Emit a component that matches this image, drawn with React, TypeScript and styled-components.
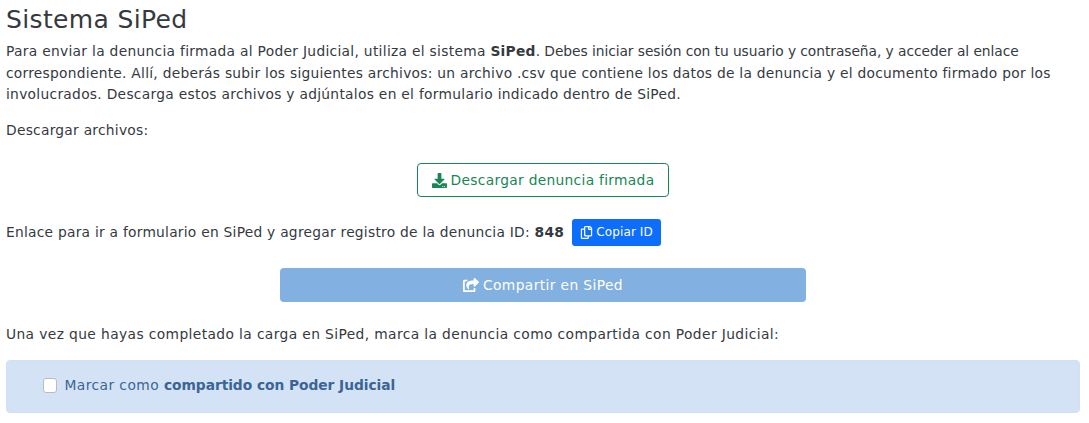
import React from 'react'
import styled, { createGlobalStyle } from 'styled-components'
import { FaDownload, FaRegCopy, FaShareSquare } from 'react-icons/fa'

const GlobalStyle = createGlobalStyle`
  * {
    box-sizing: border-box;
  }

  body {
    margin: 0;
    background: #fff;
    color: #343a40;
    font-family: "DejaVu Sans", sans-serif;
    font-size: 13.8px;
    line-height: 21.6px;
    letter-spacing: 0.26px;
  }
`

const Page = styled.article`
  width: 1089px;
  height: 423px;
  padding: 4px 9px 0 6px;
  overflow: hidden;
`

const Title = styled.h2`
  margin: 0 0 6px;
  font-size: 25px;
  font-weight: 400;
  line-height: 31px;
  letter-spacing: 0.35px;
`

const Paragraph = styled.p`
  margin: 0 0 14px;
`

const Line = styled.span<{ $track?: number }>`
  display: block;
  white-space: nowrap;
  letter-spacing: ${p => p.$track ?? 0.26}px;
`

const Tracked = styled.span<{ $track: number }>`
  letter-spacing: ${p => p.$track}px;
`

const Centered = styled.div<{ $top: number }>`
  display: flex;
  justify-content: center;
  margin-top: ${p => p.$top}px;
`

const OutlineButton = styled.button`
  display: inline-flex;
  align-items: center;
  justify-content: center;
  gap: 4px;
  width: 252px;
  height: 34px;
  border: 1px solid #198754;
  border-radius: 4px;
  background: #fff;
  color: #198754;
  font: inherit;
  letter-spacing: 0.3px;
`

const LinkRow = styled.div`
  display: flex;
  align-items: center;
  gap: 8px;
  margin-top: 22px;
  letter-spacing: 0.25px;
`

const CopyButton = styled.button`
  display: inline-flex;
  align-items: center;
  justify-content: center;
  gap: 3px;
  width: 89px;
  height: 27px;
  border: 0;
  border-radius: 3px;
  background: #0d6efd;
  color: #fff;
  font: inherit;
  font-size: 12px;
  letter-spacing: 0.1px;
`

const ShareButton = styled.button`
  display: inline-flex;
  align-items: center;
  justify-content: center;
  gap: 4px;
  width: 526px;
  height: 34px;
  border: 0;
  border-radius: 4px;
  background: #82b0e0;
  color: #fff;
  font: inherit;
  letter-spacing: 0.39px;
`

const Notice = styled.p`
  margin: 22px 0 14px;
  letter-spacing: 0.39px;
`

const Alert = styled.div`
  display: flex;
  align-items: center;
  gap: 7px;
  height: 53px;
  padding: 0 0 2px 36px;
  border: 1px solid #cfe2f5;
  border-radius: 4px;
  background: #d3e3f5;
  color: #3a6595;
  letter-spacing: 0.45px;

  b {
    letter-spacing: -0.05px;
  }
`

const Check = styled.input`
  width: 14.4px;
  height: 14.4px;
  margin: 0;
  appearance: none;
  border: 1px solid #bbb;
  border-radius: 3px;
  background: #fff;
`

const App: React.FC = () => (
  <Page>
    <GlobalStyle />
    <Title>Sistema SiPed</Title>
    <Paragraph>
      <Line>
        <Tracked $track={0.3}>
          Para enviar la denuncia firmada al Poder Judicial, utiliza el sistema{' '}
        </Tracked>
        <b>SiPed</b>
        <Tracked $track={-0.06}>
          . Debes iniciar sesión con tu usuario y contraseña, y acceder al enlace
        </Tracked>
      </Line>
      <Line>
        correspondiente. Allí, deberás subir los siguientes archivos: un archivo .csv que contiene
        los datos de la denuncia y el documento firmado por los
      </Line>
      <Line $track={0.29}>
        involucrados. Descarga estos archivos y adjúntalos en el formulario indicado dentro de
        SiPed.
      </Line>
    </Paragraph>
    <Paragraph>Descargar archivos:</Paragraph>
    <Centered $top={22}>
      <OutlineButton>
        <FaDownload size={15} />
        Descargar denuncia firmada
      </OutlineButton>
    </Centered>
    <LinkRow>
      <span>
        Enlace para ir a formulario en SiPed y agregar registro de la denuncia ID: <b>848</b>
      </span>
      <CopyButton>
        <FaRegCopy size={13} />
        Copiar ID
      </CopyButton>
    </LinkRow>
    <Centered $top={22}>
      <ShareButton>
        <FaShareSquare size={16} />
        Compartir en SiPed
      </ShareButton>
    </Centered>
    <Notice>
      Una vez que hayas completado la carga en SiPed, marca la denuncia como compartida con Poder
      Judicial:
    </Notice>
    <Alert>
      <Check type="checkbox" />
      <span>
        Marcar como <b>compartido con Poder Judicial</b>
      </span>
    </Alert>
  </Page>
)

export default App
